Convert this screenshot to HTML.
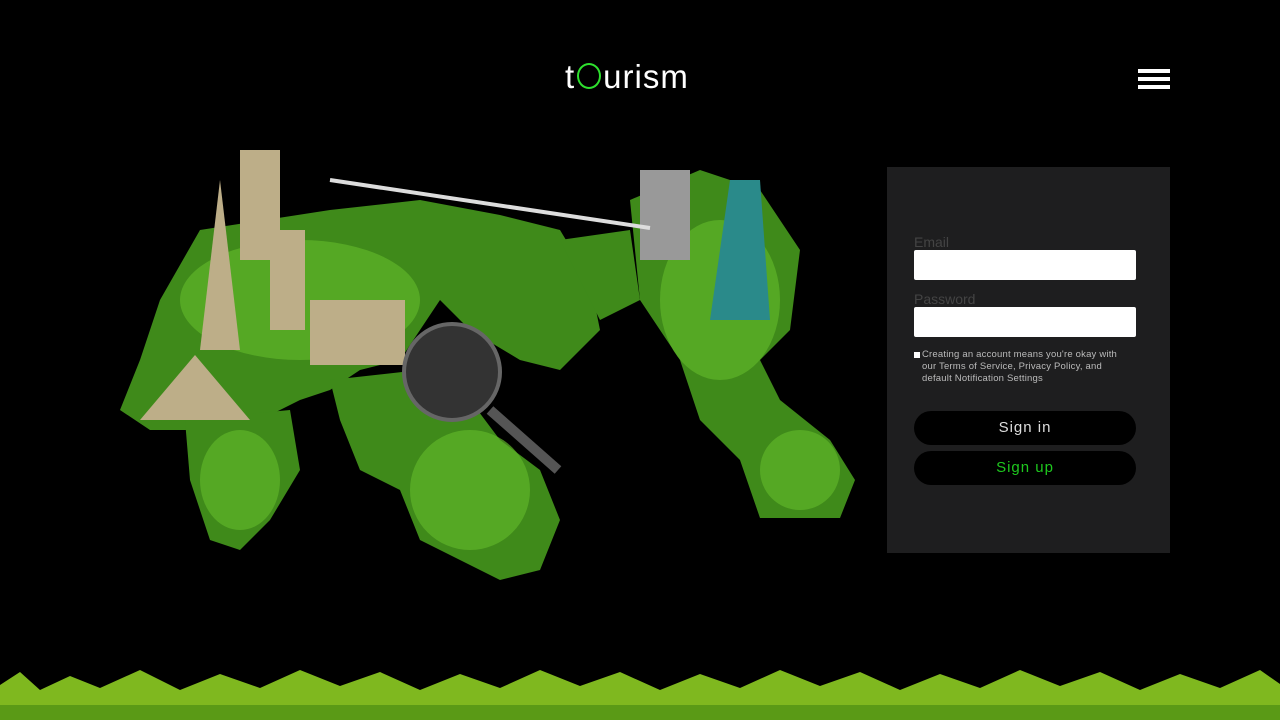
<!DOCTYPE html>
<html><head><style>
body{margin:0;width:1280px;height:720px;background:#000;overflow:hidden;position:relative;font-family:"Liberation Sans",sans-serif}
.logo{position:absolute;left:565px;top:58px;font-size:33px;color:#fff;letter-spacing:1px;font-weight:300}
.logo span{display:inline-block;width:20px;height:22px;border:2px solid #2ee02e;border-radius:50%;vertical-align:-1px;margin:0 2px}
.menu{position:absolute;left:1138px;top:69px;width:32px}
.menu div{height:4px;background:#fff;margin-bottom:4px}
.panel{position:absolute;left:887px;top:167px;width:283px;height:386px;background:#1e1e1f}
.lbl{position:absolute;left:27px;color:#444;font-size:14px}
.inp{position:absolute;left:27px;width:222px;height:30px;background:#fff;border-radius:2px}
.terms{position:absolute;left:27px;top:182px;width:210px;color:#bbb;font-size:9.5px;line-height:12px;padding-left:8px;letter-spacing:.2px}
.terms i{position:absolute;left:0;top:3px;width:6px;height:6px;background:#fff}
.btn{position:absolute;left:27px;width:222px;height:34px;background:#000;border-radius:17px;text-align:center;line-height:34px;font-size:15px;letter-spacing:1px}
</style></head><body>
<svg style="position:absolute;left:0;top:0" width="1280" height="720">
<g fill="#3f8a1a">
<path d="M160 300 L200 230 L330 210 L420 200 L500 215 L560 230 L590 280 L600 330 L560 370 L520 360 L470 330 L440 300 L400 360 L360 370 L330 390 L300 400 L260 420 L230 430 L150 430 L120 410 L140 360 Z"/>
<path d="M185 420 L290 410 L300 470 L270 520 L240 550 L210 540 L190 480 Z"/>
<path d="M330 380 L420 370 L470 400 L500 440 L540 470 L560 520 L540 570 L500 580 L460 560 L420 540 L400 490 L360 470 L340 420 Z"/>
<path d="M630 200 L700 170 L760 190 L800 250 L790 330 L760 360 L780 400 L830 440 L855 480 L840 518 L760 518 L740 460 L700 420 L680 360 L640 300 Z"/>
<path d="M560 240 L630 230 L640 300 L600 320 Z"/>
</g>
<g fill="#5fb52a" opacity=".7">
<ellipse cx="300" cy="300" rx="120" ry="60"/><ellipse cx="240" cy="480" rx="40" ry="50"/><ellipse cx="470" cy="490" rx="60" ry="60"/><ellipse cx="720" cy="300" rx="60" ry="80"/><ellipse cx="800" cy="470" rx="40" ry="40"/>
</g>
<g fill="#bdae88"><rect x="240" y="150" width="40" height="110"/><polygon points="200,350 220,180 240,350"/><rect x="270" y="230" width="35" height="100"/><rect x="310" y="300" width="95" height="65"/><polygon points="140,420 195,355 250,420"/><rect x="640" y="170" width="50" height="90" fill="#999"/></g>
<polygon points="710,320 730,180 760,180 770,320" fill="#2a8a8a"/>
<circle cx="452" cy="372" r="48" fill="#333" stroke="#666" stroke-width="4"/>
<line x1="490" y1="410" x2="558" y2="470" stroke="#555" stroke-width="10"/>
<line x1="330" y1="180" x2="650" y2="228" stroke="#ddd" stroke-width="4"/>
<path d="M0 720 L0 685 L20 672 L40 690 L70 676 L100 688 L140 670 L180 690 L220 674 L260 688 L300 670 L340 686 L380 672 L420 690 L460 674 L500 688 L540 670 L580 686 L620 672 L660 690 L700 674 L740 688 L780 670 L820 686 L860 672 L900 690 L940 674 L980 688 L1020 670 L1060 686 L1100 672 L1140 690 L1180 674 L1220 688 L1260 670 L1280 684 L1280 720 Z" fill="#7fb81f"/>
<rect x="0" y="705" width="1280" height="15" fill="#5a9a16"/>
</svg>
<div class="logo">t<span></span>urism</div>
<div class="menu"><div></div><div></div><div></div></div>
<div class="panel">
<div class="lbl" style="top:67px">Email</div>
<div class="inp" style="top:83px"></div>
<div class="lbl" style="top:124px">Password</div>
<div class="inp" style="top:140px"></div>
<div class="terms"><i></i>Creating an account means you're okay with our Terms of Service, Privacy Policy, and default Notification Settings</div>
<div class="btn" style="top:244px;color:#ddd">Sign in</div>
<div class="btn" style="top:284px;color:#1ec81e">Sign up</div>
</div>
</body></html>
